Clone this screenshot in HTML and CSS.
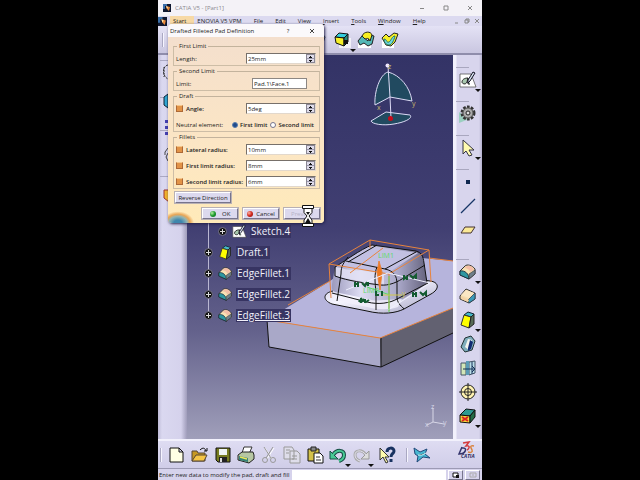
FILE: index.html
```html
<!DOCTYPE html>
<html lang="en">
<head>
<meta charset="utf-8">
<title>CATIA V5 - [Part1]</title>
<link rel="stylesheet" href="styles.css">
</head>
<body>
<svg class="defs" aria-hidden="true">
  <defs>
    <symbol id="app" viewBox="0 0 8 8"><path fill="#101830" d="M0 0h8v8H0z"/><path fill="#3a6ea8" d="M0 0h4v2H2v3H0z"/><path fill="#e88838" d="m3 2 4 1-1 4-2-2z"/><path fill="#ffe8b0" d="m3 2 2 1-1 2z"/></symbol>
    <symbol id="fillet" viewBox="0 0 18 18"><path fill="#f8e3b4" stroke="#333" d="M1 8 6 3c2-2 7-1 10 3v5l-6 5-9-4z"/><path fill="#f4bfa8" d="M8 3c4-1 6 1 7 4l-4 2C10 6 8 5 5 5z"/><path fill="#2f97a0" stroke="#123" stroke-width=".8" d="M1 8c5-1 9 3 9 8l-9-4z"/><path fill="#6f7f8a" stroke="#333" stroke-width=".6" d="m10 11 6-4v4l-6 5z"/></symbol>
    <symbol id="chamfer" viewBox="0 0 18 18"><path fill="#f6dfb0" stroke="#333" d="m1 9 6-7 9 4v6l-6 4-9-4z"/><path fill="#fbe8c4" d="m7 3 8 3-5 5-8-3z"/><path fill="#3b9ab8" stroke="#234" stroke-width=".7" d="m9 13 7-7v6l-6 4z"/><path fill="#f3d3a5" d="m2 9 8 4-1 2-7-3z"/></symbol>
    <symbol id="draft" viewBox="0 0 18 18"><path fill="#45b9c7" stroke="#123" d="m5 4 4-3 6 2-3 3z"/><path fill="#ff0" stroke="#333" d="m5 4 7 2-2 11-8-3z"/><path fill="#586c56" stroke="#222" d="m12 6 3-3v10l-5 4z"/></symbol>
    <symbol id="shell" viewBox="0 0 18 18"><path fill="#80aebc" stroke="#233" d="m2 12 4-9 6-2 4 5-3 9-7 2z"/><path fill="#f3f5ef" d="m6 12 3-8 4 1-3 10z"/><path fill="#102c72" d="m9 13 2-8 3 2-2 7-3 2z"/></symbol>
    <symbol id="thread" viewBox="0 0 18 18"><path fill="#d3e6b8" stroke="#456" d="M2 4h5v12H2z"/><path fill="#b9dce6" stroke="#456" d="m10 3 6-1v12l-6 2z"/><path fill="#5b9ab5" d="M7 2h3v14H7z"/><path stroke="#153058" d="M4 10h12m-3-3 3 3-3 3M13 3v12" fill="none"/></symbol>
    <symbol id="target" viewBox="0 0 18 18"><circle cx="9" cy="9" r="7" fill="#fff3b0" stroke="#222"/><circle cx="9" cy="9" r="3.500" fill="none" stroke="#222"/><path stroke="#222" d="M9 0v18M0 9h18"/></symbol>
    <symbol id="material" viewBox="0 0 18 18"><path fill="#2d9a92" stroke="#111" d="m1 8 6-6 9 1-5 6z"/><path fill="#f4d83d" stroke="#111" d="m1 8 10 1v7L1 15z"/><path fill="#246c46" stroke="#111" d="m11 9 5-6v7l-5 6z"/><path stroke="#d22" stroke-width="2" d="m3 10 6 4m0-4-6 4"/></symbol>
    <symbol id="sketch" viewBox="0 0 18 18"><path fill="#fff" stroke="#444" stroke-width=".7" d="M1 3h11l5 13H1z"/><path fill="#a8c8ae" stroke="#222" d="M9 7c-4 0-6 2-6 4s4 3 5 0l1-4v6h2"/><path fill="#d8e3ef" stroke="#112" d="m9 9 5-8 2 1-5 8-2 2z"/></symbol>
    <symbol id="gear" viewBox="0 0 18 18"><path fill="#9bcfc0" d="M0 7v11l10-4z"/><circle cx="9" cy="8" r="6" fill="#aaa" stroke="#333" stroke-width="3" stroke-dasharray="2.500 1.300"/><circle cx="9" cy="8" r="5" fill="#aaa" stroke="#555"/><circle cx="9" cy="8" r="2" fill="#ddd" stroke="#222"/></symbol>
    <symbol id="cursor" viewBox="0 0 18 18"><path fill="#fffbb0" stroke="#334" d="M4 1v14l3-3 3 5 3-1-3-5h5z"/></symbol>
    <symbol id="point" viewBox="0 0 18 18"><path fill="#102850" d="M7 7h4v4H7z"/></symbol>
    <symbol id="line" viewBox="0 0 18 18"><path stroke="#173566" stroke-width="1.200" d="M2 16 16 2"/></symbol>
    <symbol id="plane" viewBox="0 0 18 18"><path fill="#fbe996" stroke="#433" d="M6 6h10l-4 6H2z"/></symbol>
    <symbol id="box" viewBox="0 0 18 18"><path fill="#fff" opacity=".7" d="M6 7h12v10H6z"/><path fill="#31cddd" stroke="#111" d="m2 6 4-4 9 1-3 4z"/><path fill="#f5ef28" stroke="#111" d="m2 6 9 1v8l-8-3z"/><path fill="#28867b" stroke="#111" d="m11 7 4-4v8l-4 4z"/><path fill="#111" d="M11 9h4v4h-4z"/></symbol>
    <symbol id="loft" viewBox="0 0 18 18"><path fill="#fff" d="M1 10h13v7H1z"/><path fill="#54b8b6" stroke="#222" d="m1 10 4-5 6 5 2-6 4 1-2 8-4 2-4-3-4 2z"/><path fill="#f8ef20" stroke="#222" d="M5 5c2-5 9-5 10-1l-2 6c-1-3-3-3-5-2z"/></symbol>
    <symbol id="groove" viewBox="0 0 18 18"><path fill="#fff" d="M1 8h12v9H1z"/><path fill="#f5ef28" stroke="#222" d="m1 7 4-4 3 3 5-4 4 1-3 8-4 4-5-1z"/><path fill="#6fd9df" stroke="#276" d="M3 8c3 0 2 4 5 3 2-1 3-6 6-6-1 4-3 9-6 9-3 0-5-3-5-6z"/></symbol>
    <symbol id="new" viewBox="0 0 18 18"><path fill="#ffffe5" stroke="#111" d="M2 2h9l4 4v10H2zM11 2v4h4"/></symbol>
    <symbol id="open" viewBox="0 0 18 18"><path fill="#c69822" stroke="#543" d="M1 15V5h5l1 2h7v8z"/><path fill="#f5c545" stroke="#543" d="m1 15 4-6h11l-3 6z"/><path fill="none" stroke="#111" d="M9 4c3-3 5-2 6 1m-2 0h3V2"/></symbol>
    <symbol id="save" viewBox="0 0 18 18"><path fill="#767b20" stroke="#111" d="M2 2h14v14H4l-2-2z"/><path fill="#eef4f3" d="M5 3h8v6H5z"/><path fill="#222" d="M5 11h8v5H5z"/><path fill="#ddd" d="M6 12h2v4H6z"/></symbol>
    <symbol id="print" viewBox="0 0 18 18"><path fill="#fff" stroke="#333" d="m5 7 2-6h8l-3 7z"/><path fill="#b7c7a3" stroke="#222" d="m1 9 4-3h11l1 3v4l-5 4-11-3z"/><path fill="#358276" d="m2 10 9 2v4l-9-2z"/><path stroke="#eee75b" stroke-width="1.500" d="m3 11 7 2"/></symbol>
    <symbol id="cut" viewBox="0 0 18 18"><path fill="none" stroke="#fff" d="m5 2 7 11m2-11L7 13"/><path fill="none" stroke="#999" d="m4 1 7 11m2-11L6 12"/><circle cx="5" cy="14" r="2.500" fill="none" stroke="#999"/><circle cx="13" cy="14" r="2.500" fill="none" stroke="#999"/></symbol>
    <symbol id="copy" viewBox="0 0 18 18"><path fill="#deddea" stroke="#999" d="M1 1h8l2 3v9H1zM7 5h7l3 3v9H7z"/><path stroke="#999" d="M3 4h4M3 7h3m3 3h5m-5 3h5"/></symbol>
    <symbol id="paste" viewBox="0 0 18 18"><path fill="#d3c14b" stroke="#111" d="M2 3h11v12H2z"/><path fill="#888" stroke="#222" d="M5 1h5v4H5z"/><path fill="#fff" stroke="#111" d="M8 7h6l3 3v7H8z"/><path stroke="#333" d="M10 11h4m-4 3h5"/></symbol>
    <symbol id="undo" viewBox="0 0 18 18"><path fill="none" stroke="#164d44" stroke-width="4" d="M4 9c4-6 11-5 11 0 0 3-2 5-5 6"/><path fill="#48c995" stroke="#164d44" d="M1 5v8h8z"/><path fill="none" stroke="#48c995" stroke-width="2" d="M4 9c4-6 11-5 11 0 0 3-2 5-5 6"/></symbol>
    <symbol id="redo" viewBox="0 0 18 18"><path fill="none" stroke="#aaa" stroke-width="3" d="M14 9C10 3 3 4 3 9c0 3 2 5 5 6"/><path fill="#ddd" stroke="#999" d="M17 5v8H9z"/><path fill="none" stroke="#e3e1ef" d="M14 9C10 3 3 4 3 9c0 3 2 5 5 6"/></symbol>
    <symbol id="help" viewBox="0 0 18 18"><path fill="#fffbad" stroke="#333" d="M2 2v12l3-3 3 6 2-1-3-5h4z"/><path fill="none" stroke="#183260" stroke-width="3" d="M9 6c0-5 7-5 7-1 0 3-3 2-3 6m0 2v3"/></symbol>
    <symbol id="star" viewBox="0 0 18 18"><path fill="#48b7d1" stroke="#214879" d="m1 2 6 4 7-3-2 5 5 4-7-1-6 5 1-6-3-2z"/><path stroke="#d9faff" d="m5 9 4 0 4-2"/></symbol>
  </defs>
</svg>
<div class="app">
  <header class="titlebar">
    <svg class="logo"><use href="#app"/></svg>
    <span class="caption">CATIA V5 - [Part1]</span>
    <button class="wbtn" aria-label="Minimize"><svg viewBox="0 0 6 6"><path d="M1 3.500h4"/></svg></button>
    <button class="wbtn" aria-label="Maximize"><svg viewBox="0 0 6 6"><path d="M1 1h4v4H1z"/></svg></button>
    <button class="wbtn" aria-label="Close"><svg viewBox="0 0 6 6"><path d="m1 1 4 4m0-4L1 5"/></svg></button>
  </header>
  <nav class="menubar">
    <svg class="menulogo"><use href="#app"/></svg>
    <a class="start" href="#start">Start</a>
    <a href="#vpm">ENOVIA V5 VPM</a>
    <a href="#file">File</a>
    <a href="#edit">Edit</a>
    <a href="#view">View</a>
    <a href="#insert"><u>I</u>nsert</a>
    <a href="#tools"><u>T</u>ools</a>
    <a href="#window"><u>W</u>indow</a>
    <a href="#help"><u>H</u>elp</a>
    <div class="mdi">
      <button aria-label="Minimize part"><svg viewBox="0 0 6 6"><path d="M1 5h3"/></svg></button>
      <button aria-label="Restore part"><svg viewBox="0 0 6 6"><path d="M2 2V1h3v3H4M1 2h3v3H1z"/></svg></button>
      <button aria-label="Close part"><svg viewBox="0 0 6 6"><path d="m1 1 4 4m0-4L1 5"/></svg></button>
    </div>
  </nav>
  <div class="toolbar top">
    <span class="grip"></span>
    <button class="tool" aria-label="Drafted filleted pad"><svg><use href="#shell"/></svg></button>
    <button class="tool more" aria-label="Pad"><svg><use href="#box"/></svg></button>
    <button class="tool" aria-label="Loft"><svg><use href="#loft"/></svg></button>
    <button class="tool" aria-label="Removed loft"><svg><use href="#groove"/></svg></button>
  </div>
  <main class="workspace">
    <aside class="leftbar">
      <svg viewBox="0 0 29 384" preserveAspectRatio="xMinYMin slice">
        <path stroke="#aaa8c2" d="M2 5.500h12M2 42.500h12M2 75.500h12M2 121.500h12"/>
        <path fill="none" stroke="#333" stroke-dasharray="2 1" d="M10 10c-6 1-6 11 0 14M6 12v10"/>
        <path fill="#31a7d4" stroke="#123" d="m6 42 4-3v14l-4-3z"/>
        <path fill="#4440b0" d="M7 65h3v3H7zm0 6h3v3H7zm0 6h3v3H7z"/>
        <path fill="none" stroke="#444" d="m10 93-3 4v3m3-2-2 4 2 4"/>
        <path fill="#f0b22d" stroke="#933" d="M6 135h5v12l-5-4z"/>
      </svg>
    </aside>
    <section class="viewport">
      <svg class="scene" viewBox="187 55 266 384" preserveAspectRatio="xMaxYMid slice">
        <defs>
          <linearGradient id="body" x1="0" x2="1"><stop offset="0" stop-color="#9c9abd"/><stop offset=".3" stop-color="#dddcf2"/><stop offset=".7" stop-color="#a9a7c8"/><stop offset="1" stop-color="#65637d"/></linearGradient>
          <linearGradient id="skirt" x1="0" x2="1" y2="1"><stop offset="0" stop-color="#c4c2e2"/><stop offset=".4" stop-color="#f7f6ff"/><stop offset="1" stop-color="#a3a1c3"/></linearGradient>
        </defs>
        <g stroke="#dcdaf5" fill="#214a60">
          <path d="M375 105c-1-13 5-31 13-33 12 3 22 15 24 29l-22-4z"/>
          <path d="m371 121 15-9 24 3c3 3-4 7-16 9-11 2-22 0-23-3z"/>
          <path fill="none" d="m388 66 2 31 1 21"/>
        </g>
        <circle cx="390.500" cy="118.500" r="2.500" fill="#c60c1b"/><circle cx="387.500" cy="65.500" r="2" fill="#f0e8ff"/>
        <g class="axis"><text x="388" y="69">z</text><text x="377" y="110">x</text><text x="412" y="106">y</text></g>
        <path fill="#a9a8c8" d="m267 320 113 18 1 29-112-20z"/>
        <path fill="#626171" d="m380 338 73-30v25l-72 34z"/>
        <path fill="#b6b4dc" d="m267 320 63-39 40-28 83 8v47l-73 30z"/>
        <path fill="none" stroke="#111" d="m267 320 2 27 112 20v-29m0 29 72-34"/>
        <path fill="none" stroke="#e8833c" d="m288 305 42-24m99-23 24 3m0 47-73 30-113-18"/>
        <path fill="url(#skirt)" stroke="#111" d="M333 291c-10 2-11 9-1 13l35 7c16 4 29 2 37-2l27-15c9-5 8-12-1-13l-20-3"/>
        <path fill="url(#body)" d="M335 267c7-4 26-18 37-22l43 6c6 2 8 5 9 12l3 20c-7 6-16 11-24 16-8 5-26 3-35 0l-33-7c-4-2-3-4-3-8z"/>
        <path fill="#c2c0e2" d="m338 265 31-19 49 7-30 20-44-6z"/>
        <path fill="#e4e2f5" d="M336 267c16 5 40 3 48 8v9c-18-1-35-5-49-8z" opacity=".8"/>
        <path fill="#f2f0fb" d="m331 292 4 2 32 7 35-2-4 8c-8 3-20 3-31 0l-33-7z" opacity=".8"/>
        <g fill="none" stroke="#111">
          <path d="M335 267c7-4 26-18 37-22l44 6c6 2 7 5 8 12l3 20M335 267v9c13 5 30 7 45 9 9 1 18-3 25-8l20-12M348 257c-4 6-7 8-7 17l-4 27M348 262l29-17M346 261l39 8c9 2 12 7 12 15v14c1 7 5 8 7 11M385 269l31-17M377 267c-3 7-2 16-1 25v18M332 293l35 9c12 3 23 1 30-3l31-16"/>
        </g>
        <g fill="none" stroke="#e8833c">
          <path d="m329 264 41-24 59 10-40 24zM329 264l2 34M370 240v8M429 250l2 32M389 274v37M350 273l33-25"/>
          <path fill="#ef7920" d="m379 261 3 11-2 18-3-18z"/>
        </g>
        <path fill="none" stroke="#eff0ff" d="m346 290 42-17 42 10-42 27"/>
        <path fill="none" stroke="#55dc64" d="M389 276v36m-22-25 23 8"/>
        <path stroke="#d3c74b" d="M382 295h20"/>
        <g class="lim"><text x="378" y="258">LIM1</text><text x="363" y="293">LIM2</text><text class="yellow" x="402" y="296">y</text></g>
        <g fill="none" stroke="#145b31" stroke-width="2">
          <path d="M355 282v5m3-5v5m-3-3h3m4-1 3 3 2-4m1 0v4m-5 13 3 3 3-2m-4-1v4m-2-1-2-4v5m-1-3-1 2"/>
          <path d="M404 275v4l3-2v3m3-5 3 3 3-3v4M413 292v5m3-5v5m-3-3h3m4-2 3 3 3-3v4M376 291v4h3m3-4v5"/>
        </g>
        <path fill="none" stroke="#d8d7e7" d="m433 408v14l-6 3m6-3 11 2"/>
        <g class="triad"><text x="431" y="409">z</text><text x="425" y="427">x</text><text x="443" y="425">y</text></g>
      </svg>
      <ul class="tree">
        <li class="child"><i class="node"></i><svg><use href="#sketch"/></svg><span>Sketch.4</span></li>
        <li><i class="node"></i><svg><use href="#draft"/></svg><span>Draft.1</span></li>
        <li><i class="node"></i><svg><use href="#fillet"/></svg><span>EdgeFillet.1</span></li>
        <li><i class="node"></i><svg><use href="#fillet"/></svg><span>EdgeFillet.2</span></li>
        <li><i class="node"></i><svg><use href="#fillet"/></svg><span class="current">EdgeFillet.3</span></li>
      </ul>
    </section>
    <aside class="rightbar">
      <div class="group"><button class="tool more" aria-label="Sketch"><svg><use href="#sketch"/></svg></button></div>
      <div class="group"><button class="tool" aria-label="Workbench"><svg><use href="#gear"/></svg></button></div>
      <div class="group"><button class="tool more" aria-label="Select"><svg><use href="#cursor"/></svg></button></div>
      <div class="group">
        <button class="tool" aria-label="Point"><svg><use href="#point"/></svg></button>
        <button class="tool" aria-label="Line"><svg><use href="#line"/></svg></button>
        <button class="tool" aria-label="Plane"><svg><use href="#plane"/></svg></button>
      </div>
      <div class="group spaced">
        <button class="tool more" aria-label="Edge fillet"><svg><use href="#fillet"/></svg></button>
        <button class="tool" aria-label="Chamfer"><svg><use href="#chamfer"/></svg></button>
        <button class="tool more" aria-label="Draft angle"><svg><use href="#draft"/></svg></button>
        <button class="tool" aria-label="Shell"><svg><use href="#shell"/></svg></button>
        <button class="tool" aria-label="Thickness"><svg><use href="#thread"/></svg></button>
        <button class="tool" aria-label="Thread"><svg><use href="#target"/></svg></button>
        <button class="tool more" aria-label="Apply material"><svg><use href="#material"/></svg></button>
      </div>
    </aside>
  </main>
  <div class="toolbar bottom">
    <span class="grip"></span>
    <button class="tool" aria-label="New"><svg><use href="#new"/></svg></button>
    <button class="tool" aria-label="Open"><svg><use href="#open"/></svg></button>
    <button class="tool" aria-label="Save"><svg><use href="#save"/></svg></button>
    <button class="tool" aria-label="Print"><svg><use href="#print"/></svg></button>
    <button class="tool" aria-label="Cut"><svg><use href="#cut"/></svg></button>
    <button class="tool" aria-label="Copy"><svg><use href="#copy"/></svg></button>
    <button class="tool" aria-label="Paste"><svg><use href="#paste"/></svg></button>
    <button class="tool more" aria-label="Undo"><svg><use href="#undo"/></svg></button>
    <button class="tool more" aria-label="Redo"><svg><use href="#redo"/></svg></button>
    <button class="tool wide" aria-label="What's this?"><svg><use href="#help"/></svg></button>
    <span class="grip"></span>
    <button class="tool" aria-label="Fly mode"><svg><use href="#star"/></svg></button>
    <svg class="brand" viewBox="0 0 24 18"><path fill="none" stroke="#d43b3e" stroke-width="1.500" d="m6 2 6-1-3 4c5-1 3 3 1 4"/><path fill="none" stroke="#34346c" stroke-width="1.500" d="m5 6-3 7c7 0 9-7 3-6"/><path fill="none" stroke="#d98540" stroke-width="1.500" d="M17 5c-5-1-3 2-2 4s-1 3-4 2"/><text x="4" y="17">CATIA</text></svg>
  </div>
  <footer class="statusbar">
    <label for="command">Enter new data to modify the pad, draft and fill</label>
    <input id="command" type="text">
    <button aria-label="Power input"><svg viewBox="0 0 8 6"><path fill="#fff" stroke="#111" d="M1 1h5v4H1z"/><path fill="#111" d="M4 3h3v3H4z"/></svg></button>
    <button aria-label="Knowledge" disabled><svg viewBox="0 0 8 6"><path fill="none" stroke="#aaa" d="M1 1h6v4H1zM3 3h2"/></svg></button>
  </footer>

  <form class="dialog">
    <div class="dialog-title"><span>Drafted Filleted Pad Definition</span><button type="button" aria-label="Help">?</button><button type="button" aria-label="Close"><svg viewBox="0 0 6 6"><path d="m1 1 4 4m0-4L1 5"/></svg></button></div>
    <div class="dialog-body">
      <fieldset>
        <legend>First Limit</legend>
        <div class="row"><label for="length">Length:</label><div class="spin"><input id="length" value="25mm"><button type="button" aria-label="Step length"></button></div></div>
      </fieldset>
      <fieldset>
        <legend>Second Limit</legend>
        <div class="row"><label for="limit">Limit:</label><input class="pick" id="limit" value="Pad.1\Face.1"></div>
      </fieldset>
      <fieldset>
        <legend>Draft</legend>
        <div class="row"><label class="param" for="angle">Angle:</label><div class="spin"><input id="angle" value="5deg"><button type="button" aria-label="Step angle"></button></div></div>
        <div class="row choices"><span>Neutral element:</span><label><input type="radio" name="neutral" checked>First limit</label><label><input type="radio" name="neutral">Second limit</label></div>
      </fieldset>
      <fieldset>
        <legend>Fillets</legend>
        <div class="row"><label class="param" for="lateral">Lateral radius:</label><div class="spin"><input id="lateral" value="10mm"><button type="button" aria-label="Step lateral radius"></button></div></div>
        <div class="row"><label class="param" for="first">First limit radius:</label><div class="spin"><input id="first" value="8mm"><button type="button" aria-label="Step first radius"></button></div></div>
        <div class="row"><label class="param" for="second">Second limit radius:</label><div class="spin"><input id="second" value="6mm"><button type="button" aria-label="Step second radius"></button></div></div>
      </fieldset>
      <button type="button" class="btn reverse">Reverse Direction</button>
      <div class="actions">
        <button type="button" class="btn"><i class="led green"></i>OK</button>
        <button type="button" class="btn"><i class="led red"></i>Cancel</button>
        <button type="button" class="btn" disabled>Preview</button>
      </div>
    </div>
    <svg class="hourglass" viewBox="0 0 12 22"><path fill="#fff" stroke="#111" d="M.5.500h11v3H.5zm0 18h11v3H.5zM2 3.500h8v4L7 11l3 4v3.500H2V15l3-4-3-3.500z"/><path fill="#111" d="M4 7h4l-2 3zm2 6 3 5H3z"/></svg>
  </form>
</div>
</body>
</html>
```

FILE: styles.css
```css
* { box-sizing: border-box; }
body {
  margin: 0;
  min-height: 100vh;
  background: #000;
  color: #222;
  font: 6px/8px "Open Sans", "Noto Sans", sans-serif;
  display: grid;
  grid-template-columns: 79fr minmax(0, 162fr) 79fr;
}
button, input { font: inherit; color: inherit; margin: 0; padding: 0; border: 0; background: none; border-radius: 0; min-width: 0; }
button { display: flex; align-items: center; justify-content: center; }
a { color: inherit; text-decoration: none; }
.defs { position: absolute; width: 0; height: 0; }

.app {
  grid-column: 2;
  position: relative;
  display: grid;
  grid-template-rows: auto auto auto 1fr auto auto;
  min-height: 100vh;
  background: #d6d3ec;
  overflow: hidden;
}

.titlebar { display: flex; align-items: center; height: 16px; padding: 0 9px 0 5px; background: #f4f2f7; }
.logo { width: 8px; height: 8px; margin-right: 4px; }
.caption { flex: 1; color: #8b8990; }
.wbtn { width: 6px; margin-left: 18px; }
.wbtn svg, .mdi svg, .dialog-title svg { width: 6px; height: 6px; fill: none; stroke: #888; stroke-width: 1; }

.menubar { display: flex; align-items: center; gap: 12px; height: 10px; background: #dcdaf0; padding-right: 2px; }
.menubar a { white-space: nowrap; }
.menulogo { width: 9px; height: 9px; margin-right: -9px; flex: none; }
.menubar .start { background: #f7d9a5; padding: 1px 8px 1px 3px; margin-right: -9px; }
.menubar a u { text-underline-offset: 1px; }
.mdi { display: flex; gap: 4px; margin-left: auto; }

.toolbar { display: flex; align-items: center; background: linear-gradient(#dedcf2, #d0cde8); }
.top { height: 29px; border-bottom: 2px solid #8f8dab; padding-left: 4px; background: linear-gradient(#e4e2f5, #c9c6e0); }
.top .grip { margin-right: auto; }
.top .tool { width: 24px; }
.top .tool:last-child { margin-right: 80px; }
.grip { width: 2px; height: 14px; border-left: 1px solid #aaa8c2; border-right: 1px solid #f6f5ff; }
.tool { position: relative; width: 23px; height: 24px; flex: none; }
.tool svg { width: 18px; height: 18px; }
.more::after {
  content: "";
  position: absolute;
  right: -2px;
  bottom: 0;
  border: 3px solid transparent;
  border-top: 3px solid #111;
  border-bottom: 0;
}

.workspace { display: grid; grid-template-columns: 29px minmax(0, 1fr) 29px; min-height: 0; }
.leftbar { background: linear-gradient(90deg, #bfbcd8, #dad8f0 4px, #d5d2ec 23px, #9f9cba); overflow: hidden; }
.leftbar svg { display: block; width: 29px; height: 384px; }
.viewport { display: grid; background: linear-gradient(#333366, #413f72 45%, #64628c 72%, #a09fba); min-height: 0; overflow: hidden; }
.scene { grid-area: 1 / 1; width: 100%; height: 100%; min-height: 0; }
.axis { fill: #c4b56b; font-size: 7px; }
.lim { fill: #5cdc68; font-size: 7px; }
.yellow { fill: #d3c74b; }
.triad { fill: #d8d7e7; font-size: 7px; }

.tree {
  grid-area: 1 / 1;
  align-self: start;
  margin: 166px 0 0 16px;
  padding: 0;
  list-style: none;
  color: #f1f0fa;
  font-size: 10px;
  line-height: 13px;
  background: linear-gradient(#b9b7d2, #b9b7d2) 5px 0 / 1px 94px no-repeat;
}
.tree li { display: flex; align-items: center; height: 21px; }
.tree .child { padding-left: 14px; }
.tree svg { width: 15px; height: 15px; margin: 0 3px 0 5px; }
.tree span { background: #373462; padding: 0 1px; }
.tree .current { text-decoration: underline; }
.node {
  width: 9px;
  height: 9px;
  margin-left: 1px;
  border-radius: 50%;
  border: 1px solid #77758c;
  background:
    linear-gradient(#ddd, #ddd) center / 5px 1px no-repeat,
    linear-gradient(#ddd, #ddd) center / 1px 5px no-repeat,
    #111;
}

.rightbar { display: flex; flex-direction: column; padding-top: 9px; background: linear-gradient(90deg, #f2f1fc 3px, #d8d5ed 4px, #d8d5ed 26px, #b4b1ce); }
.group { display: flex; flex-direction: column; align-items: center; padding: 3px 0 6px; }
.group::before { content: ""; width: 13px; height: 1px; margin-left: 3px; align-self: flex-start; background: #a9a7bf; }
.rightbar .spaced { padding-bottom: 0; margin-top: 8px; }

.bottom { height: 29px; padding-left: 2px; border-top: 2px solid #f2f1fc; }
.bottom .grip { margin-right: 3px; }
.bottom .wide { width: 29px; }
.bottom .wide + .grip { margin: 0 2px 0 5px; }
.brand { width: 24px; height: 18px; margin: -10px 1px 0 auto; }
.brand text { font: italic bold 5px "Open Sans", sans-serif; fill: #29295b; }

.statusbar { display: flex; align-items: center; gap: 2px; height: 12px; padding: 0 2px 0 1px; background: #d6d3ec; border-top: 1px solid #9c9ab4; white-space: nowrap; }
.statusbar label { flex: none; }
.statusbar input { flex: 1; height: 10px; background: #fff; }
.statusbar button { width: 15px; height: 10px; border: 1px solid; border-color: #fff #77758c #77758c #fff; }
.statusbar svg { width: 8px; height: 6px; }

.dialog {
  position: absolute;
  top: 24px;
  left: 10px;
  width: 156px;
  border-radius: 4px;
  background: #f7e3cc;
  box-shadow: 1px 1px 3px #22204a;
}
.dialog-title { display: flex; align-items: center; height: 13px; padding: 0 9px 0 2px; background: #fbf9fb; border-radius: 4px 4px 0 0; }
.dialog-title span { flex: 1; }
.dialog-title button { width: 6px; margin-left: 18px; }
.dialog-title svg { stroke: #444; }
.dialog-body {
  display: flex;
  flex-direction: column;
  gap: 1px;
  padding: 5px 4px 4px 5px;
  border-radius: 0 0 4px 4px;
  background:
    radial-gradient(ellipse at 10px 100%, #3d86ad 4px, #91b4b4 9px, #e9a656 12px, transparent 16px) left bottom / 32px 16px no-repeat,
    linear-gradient(#f4dfcd, #fce6c4 60%, #ffeab9);
}
fieldset { display: flex; flex-direction: column; gap: 5px; min-width: 0; margin: 0; padding: 3px 3px 1px 0; border: 1px solid #cdbda6; border-top-color: #c3b39d; }
legend { margin-left: 3px; padding: 0 2px; line-height: 8px; }
.row { display: flex; align-items: center; justify-content: space-between; height: 11px; padding-left: 2px; }
.param { display: flex; align-items: center; gap: 3px; font-weight: 600; }
.param::before { content: ""; width: 5px; height: 5px; background: #e29347; border: 1px solid #ad6937; border-top-color: #f4c78c; }
.spin { display: flex; width: 70px; height: 11px; border: 1px solid; border-color: #77706a #e2d8cc #e2d8cc #77706a; background: #fff; }
.spin input { flex: 1; padding-left: 1px; }
.spin button {
  width: 9px;
  border: 1px solid #8a8794;
  background:
    linear-gradient(#111, #111) center 2px / 3px 1px no-repeat,
    linear-gradient(#111, #111) center 1px / 1px 1px no-repeat,
    linear-gradient(#111, #111) center 5px / 3px 1px no-repeat,
    linear-gradient(#111, #111) center 6px / 1px 1px no-repeat,
    linear-gradient(#9a98ac, #9a98ac) center / 100% 1px no-repeat,
    #dedbea;
}
.pick { width: 55px; height: 11px; margin-right: 9px; padding-left: 1px; background: #fff; border: 1px solid #8d8783; }
.choices { justify-content: flex-start; gap: 3px; padding-right: 2px; }
.choices span { flex: 1; }
.choices label { display: flex; align-items: center; gap: 2px; font-weight: 600; }
.choices input { appearance: none; width: 6px; height: 6px; border: 1px solid #77758c; border-radius: 50%; background: #fff; }
.choices input:checked { background: #204b8c; border-color: #5a7fae; }
.btn { height: 11px; color: #222; background: #dcd9ee; border: 1px solid; border-color: #fff #77748c #77748c #fff; box-shadow: 0 0 0 1px #b8b0b4; }
.btn:disabled { color: #b5b2c6; }
.reverse { width: 56px; margin: 2px 0 0 2px; }
.actions { display: grid; grid-template-columns: repeat(3, 36px); justify-content: end; gap: 5px; margin-top: 4px; }
.actions .btn { justify-content: space-evenly; }
.led { width: 6px; height: 6px; border-radius: 50%; }
.green { background: radial-gradient(circle at 2px 2px, #b6f0a6, #1e9a2c 50%, #0a6020); }
.red { background: radial-gradient(circle at 2px 2px, #ffb0a0, #d0281e 50%, #801010); }
.hourglass { position: absolute; right: 10px; bottom: -4px; width: 12px; height: 22px; }
```
